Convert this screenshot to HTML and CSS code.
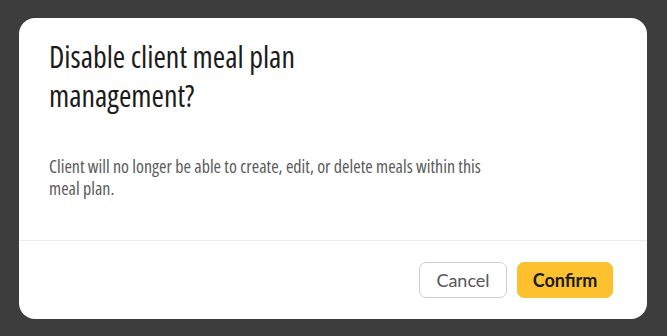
FILE: index.html
```html
<!DOCTYPE html>
<html lang="en">
<head>
    <meta charset="UTF-8">
    <meta name="viewport" content="width=device-width, initial-scale=1.0">
    <title>Disable meal plan management</title>
    <link rel="stylesheet" href="styles.css">
</head>
<body>
    <div class="overlay">
        <div class="modal">
            <div class="modal-body">
                <h1 class="modal-title">Disable client meal plan management?</h1>
                <p class="modal-text">Client will no longer be able to create, edit, or delete meals within this meal plan.</p>
            </div>
            <div class="modal-footer">
                <button type="button" class="btn btn-cancel">Cancel</button>
                <button type="button" class="btn btn-confirm">Confirm</button>
            </div>
        </div>
    </div>
</body>
</html>
```

FILE: styles.css
```css
html, body { margin: 0; padding: 0; }
body {
    background-color: #3d3d3d;
    font-family: "Open Sans", "Lato", sans-serif;
    min-height: 100vh;
}
.overlay { padding: 18px 20px 17px 19px; }
.modal {
    background-color: #fff;
    border-radius: 16px;
    width: 628px;
    overflow: hidden;
}
.modal-body { padding: 19px 30px 41px 30px; }
.modal-title {
    margin: 0;
    max-width: 310px;
    font-size: 30px;
    line-height: 39px;
    font-weight: 400;
    font-stretch: condensed;
    color: #1c1c1c;
}
.modal-text {
    margin: 40px 0 0 0;
    max-width: 445px;
    font-size: 18px;
    line-height: 22px;
    font-stretch: condensed;
    color: #5b5b5b;
}
.modal-footer {
    border-top: 1px solid #ececec;
    display: flex;
    justify-content: flex-end;
    gap: 10px;
    padding: 21px 34px 21px 0;
}
.btn {
    font-family: "Lato", sans-serif;
    font-size: 18px;
    height: 36px;
    border-radius: 7px;
    padding: 0;
    cursor: pointer;
}
.btn-cancel {
    background-color: #fff;
    border: 1px solid #cfcfcf;
    color: #555;
    width: 88px;
}
.btn-confirm {
    background-color: #fdc130;
    border: 1px solid #fdc130;
    color: #1a1a1a;
    font-weight: 700;
    width: 96px;
}
```
